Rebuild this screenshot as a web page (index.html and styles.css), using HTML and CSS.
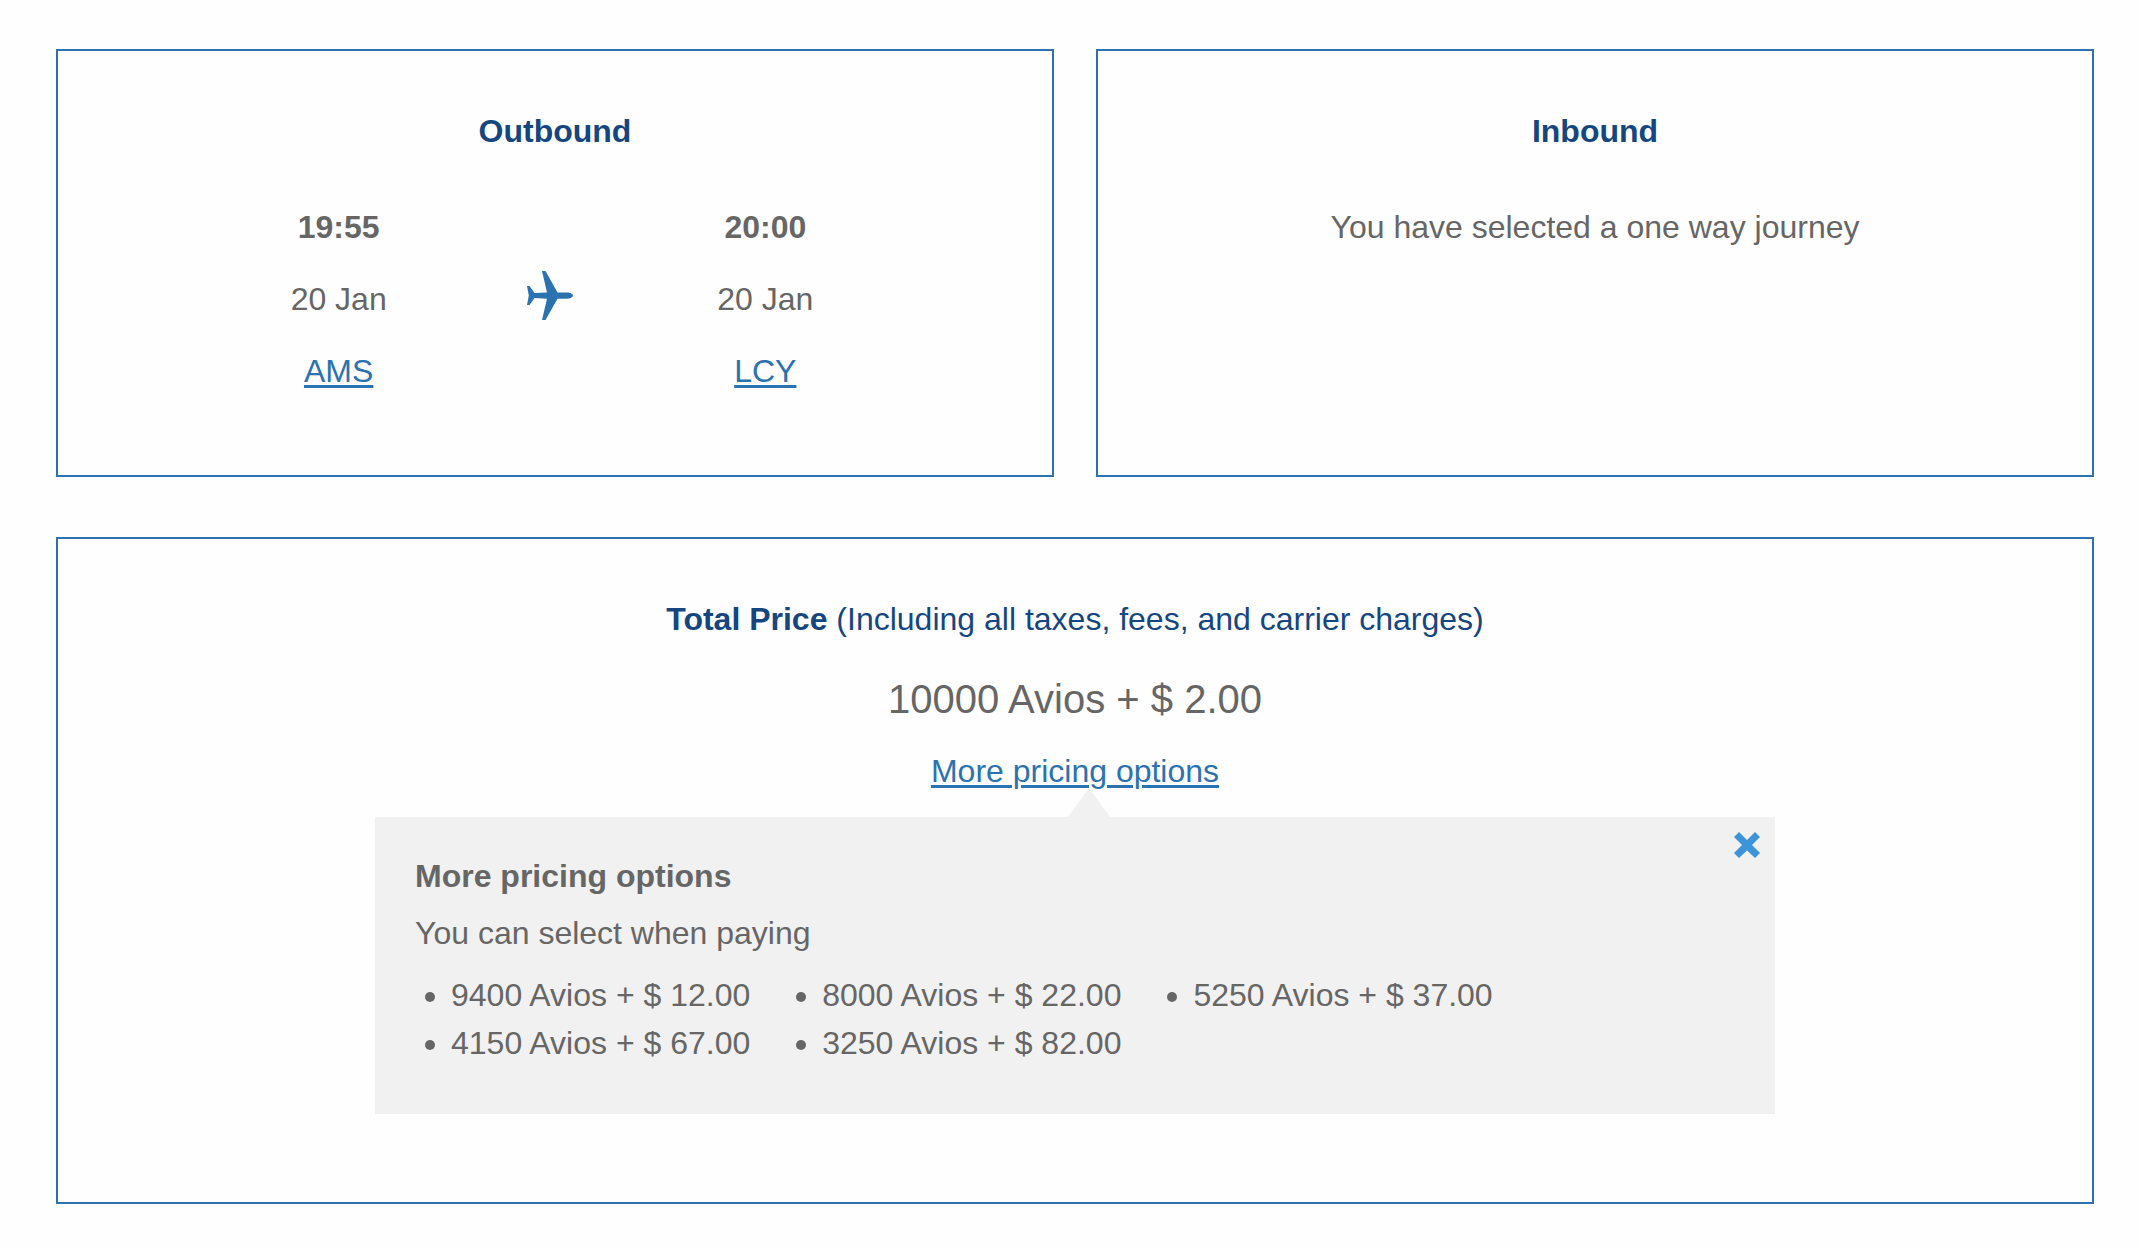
FILE: index.html
```html
<!DOCTYPE html>
<html lang="en">
<head>
  <meta charset="UTF-8">
  <title>Your selected flights</title>
  <link rel="stylesheet" href="styles.css">
</head>
<body>

  <div class="journeys">
    <section class="panel">
      <h2>Outbound</h2>
      <div class="flight">
        <div class="stop">
          <strong>19:55</strong>
          <span>20 Jan</span>
          <a href="#ams">AMS</a>
        </div>
        <svg class="plane" viewBox="0 0 46 49" aria-hidden="true">
          <path d="M15 0h3.500L30.500 21.500H40c3.500 0 6 1.500 6 3s-2.500 3.200-6 3.200H30.500L18.500 49H15L20 27.700 7.500 27 2.500 34H0l1.800-9.500L0 15h2.500l5 7L20 21.500z"/>
        </svg>
        <div class="stop">
          <strong>20:00</strong>
          <span>20 Jan</span>
          <a href="#lcy">LCY</a>
        </div>
      </div>
    </section>

    <section class="panel">
      <h2>Inbound</h2>
      <p>You have selected a one way journey</p>
    </section>
  </div>

  <section class="panel total">
    <h2>Total Price <span>(Including all taxes, fees, and carrier charges)</span></h2>
    <p class="price">10000 Avios + $ 2.00</p>
    <a href="#pricing" id="toggle">More pricing options</a>

    <div class="pricing" id="pricing">
      <button class="close" type="button" aria-label="Close">
        <svg viewBox="0 0 26 26" aria-hidden="true">
          <path d="M5 0l8 8 8-8 5 5-8 8 8 8-5 5-8-7.500L5 26l-5-5 8-8-8-8z"/>
        </svg>
      </button>
      <h3>More pricing options</h3>
      <p>You can select when paying</p>
      <ul>
        <li>9400 Avios + $ 12.00</li>
        <li>8000 Avios + $ 22.00</li>
        <li>5250 Avios + $ 37.00</li>
        <li>4150 Avios + $ 67.00</li>
        <li>3250 Avios + $ 82.00</li>
      </ul>
    </div>
  </section>

  <script>
    const pricing = document.getElementById('pricing');

    document.querySelector('.close').onclick = () => {
      pricing.hidden = true;
    };

    document.getElementById('toggle').onclick = (event) => {
      event.preventDefault();
      pricing.hidden = !pricing.hidden;
    };
  </script>

</body>
</html>
```
FILE: styles.css
```css
* {
  box-sizing: border-box;
}

body {
  margin: 0;
  padding: 49px 46px 46px 56px;
  background-color: #fefefe;
  color: #666;
  font-family: "Liberation Sans", Helvetica, Arial, sans-serif;
  font-size: 32px;
  line-height: 48px;
}

h2, h3, p, ul {
  margin: 0;
  font-size: 32px;
}

a {
  color: #2c72b0;
  text-decoration-thickness: 3px;
  text-underline-offset: 3px;
}

.journeys {
  display: grid;
  grid-template-columns: 1fr 1fr;
  gap: 42px;
  margin-bottom: 60px;
}

.panel {
  padding: 56px 0 80px;
  border: 2px solid #2c72b0;
  text-align: center;
}

.panel h2 {
  margin-bottom: 48px;
  color: #15467f;
}

.flight {
  display: grid;
  grid-template-columns: repeat(3, 1fr);
  padding: 0 180px 0 174px;
}

.stop {
  display: flex;
  flex-direction: column;
  align-items: center;
  gap: 24px;
}

.plane {
  width: 46px;
  height: 49px;
  margin: 0 4px 8px 0;
  place-self: center;
  fill: #2c72b0;
}

/* total price */
.total {
  padding-bottom: 88px;
}

.total h2 {
  margin-bottom: 24px;
}

.total h2 span {
  font-weight: normal;
}

.price {
  margin-bottom: 16px;
  font-size: 40px;
  line-height: 64px;
}

.pricing {
  position: relative;
  max-width: 1400px;
  margin: 22px auto 0;
  padding: 35px 40px 47px;
  background-color: #f1f1f1;
  text-align: left;
}

/* arrow pointing up at the link */
.pricing::before {
  content: "";
  position: absolute;
  bottom: 100%;
  left: calc(50% - 7px);
  border: 21px solid transparent;
  border-top: 0;
  border-bottom: 29px solid #f1f1f1;
}

.pricing h3 {
  margin-bottom: 9px;
}

.pricing ul {
  display: grid;
  grid-template-columns: repeat(3, max-content);
  column-gap: 72px;
  margin-top: 14px;
  padding-left: 36px;
}

.close {
  position: absolute;
  top: 15px;
  right: 15px;
  padding: 0;
  border: 0;
  background: none;
  cursor: pointer;
}

.close svg {
  display: block;
  width: 26px;
  height: 26px;
  fill: #3d94d9;
}
```
